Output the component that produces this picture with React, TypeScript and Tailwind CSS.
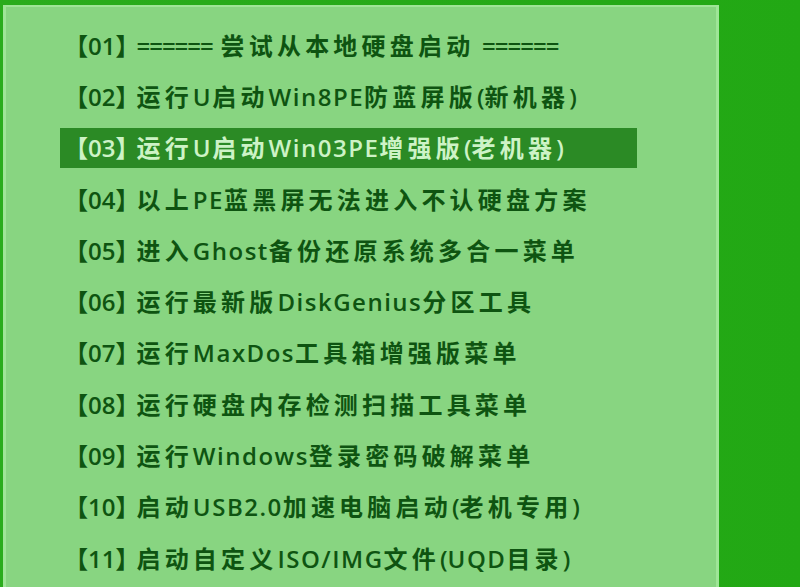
const items = [
  "====== 尝试从本地硬盘启动 ======",
  "运行U启动Win8PE防蓝屏版(新机器)",
  "运行U启动Win03PE增强版(老机器)",
  "以上PE蓝黑屏无法进入不认硬盘方案",
  "进入Ghost备份还原系统多合一菜单",
  "运行最新版DiskGenius分区工具",
  "运行MaxDos工具箱增强版菜单",
  "运行硬盘内存检测扫描工具菜单",
  "运行Windows登录密码破解菜单",
  "启动USB2.0加速电脑启动(老机专用)",
  "启动自定义ISO/IMG文件(UQD目录)",
];

const selected = 2;

// CJK runs are spaced wider than latin ones, the "======" runs and brackets tighter
function Label({ text }: { text: string }) {
  const parts = text.split(/([\u4e00-\u9fff]+|=+|[()])/).filter(Boolean);
  return (
    <>
      {parts.map((p, i) => {
        if (p.startsWith("=")) {
          return (
            <span key={i} className="tracking-[-1px]">
              {p}
            </span>
          );
        }
        if (p === "(" || p === ")") {
          return <span key={i}>{p}</span>;
        }
        if (/[\u4e00-\u9fff]/.test(p)) {
          return (
            <span key={i} className="tracking-[4.2px]">
              {p}
            </span>
          );
        }
        return (
          <span key={i} className="tracking-[1.5px]">
            {p}
          </span>
        );
      })}
    </>
  );
}

export default function App() {
  return (
    <div className="h-[587px] w-[800px] overflow-hidden bg-gradient-to-r from-[#2aac1c] to-[#22a814] pt-[5px] pl-[3px]">
      <div
        className="flex h-[600px] w-[716px] border-l-[3px] border-t-[2px] border-r-[3px] border-[#9fe597] bg-[#88d581]"
        style={{ fontFamily: '"Open Sans", "Noto Sans CJK SC", sans-serif' }}
      >
        <ul className="flex w-full flex-col pt-[13px]">
          {items.map((label, i) => (
            <li key={label} className="flex h-[51.3px] items-center">
              <div
                className={
                  i === selected
                    ? "ml-[54px] flex h-[40px] w-[577px] items-center bg-[#2b8a25] pl-[4px] text-[#cdf3c6]"
                    : "ml-[54px] flex h-[40px] items-center pl-[4px] text-[#0e5411]"
                }
              >
                <span className="whitespace-nowrap text-[24px] font-semibold leading-none">
                  <span>【</span>
                  <span>{String(i + 1).padStart(2, "0")}</span>
                  <span className="tracking-[-3px]">】</span>
                  <Label text={label} />
                </span>
              </div>
            </li>
          ))}
        </ul>
      </div>
    </div>
  );
}
